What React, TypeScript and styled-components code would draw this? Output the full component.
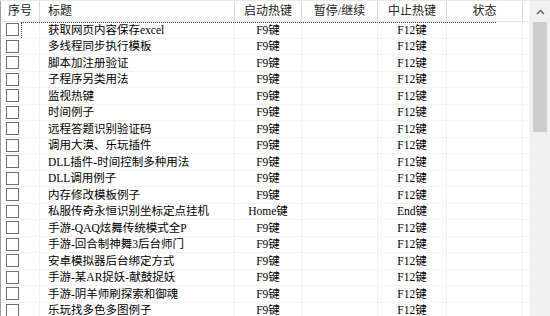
import React from 'react';
import styled, { createGlobalStyle } from 'styled-components';

const GlobalStyle = createGlobalStyle`
  html, body {
    margin: 0;
    padding: 0;
    background: #ffffff;
  }
  body {
    font-family: "Liberation Serif", "Noto Sans CJK SC", serif;
    font-size: 12px;
    color: #000;
  }
`;

const columns = [
  { key: 'no', label: '序号', width: 39, align: 'center' },
  { key: 'title', label: '标题', width: 195, align: 'left' },
  { key: 'start', label: '启动热键', width: 67, align: 'center' },
  { key: 'pause', label: '暂停/继续', width: 76, align: 'center' },
  { key: 'stop', label: '中止热键', width: 69, align: 'center' },
  { key: 'state', label: '状态', width: 76, align: 'center' },
];

const rows = [
  { title: '获取网页内容保存excel', start: 'F9键', stop: 'F12键' },
  { title: '多线程同步执行模板', start: 'F9键', stop: 'F12键' },
  { title: '脚本加注册验证', start: 'F9键', stop: 'F12键' },
  { title: '子程序另类用法', start: 'F9键', stop: 'F12键' },
  { title: '监视热键', start: 'F9键', stop: 'F12键' },
  { title: '时间例子', start: 'F9键', stop: 'F12键' },
  { title: '远程答题识别验证码', start: 'F9键', stop: 'F12键' },
  { title: '调用大漠、乐玩插件', start: 'F9键', stop: 'F12键' },
  { title: 'DLL插件-时间控制多种用法', start: 'F9键', stop: 'F12键' },
  { title: 'DLL调用例子', start: 'F9键', stop: 'F12键' },
  { title: '内存修改模板例子', start: 'F9键', stop: 'F12键' },
  { title: '私服传奇永恒识别坐标定点挂机', start: 'Home键', stop: 'End键' },
  { title: '手游-QAQ炫舞传统模式全P', start: 'F9键', stop: 'F12键' },
  { title: '手游-回合制神舞3后台师门', start: 'F9键', stop: 'F12键' },
  { title: '安卓模拟器后台绑定方式', start: 'F9键', stop: 'F12键' },
  { title: '手游-某AR捉妖-献鼓捉妖', start: 'F9键', stop: 'F12键' },
  { title: '手游-阴羊师刷探索和御魂', start: 'F9键', stop: 'F12键' },
  { title: '乐玩找多色多图例子', start: 'F9键', stop: 'F12键' },
];

const Window = styled.div`
  display: flex;
  width: 550px;
  height: 316px;
  overflow: hidden;
  border-top: 1px solid #e8e8e8;
  box-sizing: border-box;
`;

const ListArea = styled.div`
  display: flex;
  flex-direction: column;
  width: 530px;
  border-left: 1px solid #a0a0a0;
  box-sizing: border-box;
`;

const HeaderRow = styled.div`
  display: flex;
  height: 21px;
  flex-shrink: 0;
  background: #ffffff;
  border-bottom: 1px solid #e5e5e5;
  box-sizing: border-box;
`;

const HeaderCell = styled.div<{ $w: number; $align: string }>`
  width: ${p => p.$w}px;
  flex-shrink: 0;
  display: flex;
  align-items: center;
  justify-content: ${p => (p.$align === 'left' ? 'flex-start' : 'center')};
  padding-left: ${p => (p.$align === 'left' ? 8 : 0)}px;
  border-right: 1px solid #d9d9d9;
  box-sizing: border-box;
  font-size: 12px;
  line-height: 14px;
  color: #222;
`;

const Body = styled.div`
  display: flex;
  flex-direction: column;
`;

const Row = styled.div`
  display: flex;
  height: 16.5px;
  flex-shrink: 0;
  position: relative;
  box-sizing: border-box;
  border-bottom: 1px solid #f2f2f2;
`;

const FocusRect = styled.div`
  position: absolute;
  left: 20px;
  top: 0;
  width: 474px;
  bottom: 0;
  border-top: 1px dotted #333;
  border-left: 1px dotted #333;
  pointer-events: none;
`;

const Cell = styled.div<{ $w: number; $align: string }>`
  width: ${p => p.$w}px;
  flex-shrink: 0;
  display: flex;
  align-items: center;
  justify-content: ${p =>
    p.$align === 'left' ? 'flex-start' : p.$align === 'box' ? 'flex-start' : 'center'};
  padding-left: ${p => (p.$align === 'left' ? 8 : p.$align === 'box' ? 5 : 0)}px;
  border-right: 1px solid #f0f0f0;
  box-sizing: border-box;
  font-size: 11.5px;
  line-height: 14px;
  white-space: nowrap;
  overflow: hidden;
  color: #000;
`;

const CheckBox = styled.span`
  display: block;
  width: 13px;
  height: 13px;
  border: 1px solid #6f6f6f;
  background: #fff;
  box-sizing: border-box;
`;

const ScrollBar = styled.div`
  width: 20px;
  display: flex;
  flex-direction: column;
  align-items: center;
  background: #f0f0f0;
  border-left: 1px solid #f6f6f6;
`;

const ArrowButton = styled.div`
  height: 21px;
  width: 100%;
  display: flex;
  align-items: center;
  justify-content: center;
  flex-shrink: 0;
`;

const Thumb = styled.div`
  width: 14px;
  height: 110px;
  background: #cdcdcd;
`;

export default function App() {
  return (
    <>
      <GlobalStyle />
      <Window>
        <ListArea>
          <HeaderRow>
            {columns.map(c => (
              <HeaderCell key={c.key} $w={c.width} $align={c.align}>
                {c.label}
              </HeaderCell>
            ))}
          </HeaderRow>
          <Body>
            {rows.map((r, i) => (
              <Row key={i}>
                {i === 0 && <FocusRect />}
                <Cell $w={columns[0].width} $align="box">
                  <CheckBox />
                </Cell>
                <Cell $w={columns[1].width} $align="left">
                  {r.title}
                </Cell>
                <Cell $w={columns[2].width} $align="center">
                  {r.start}
                </Cell>
                <Cell $w={columns[3].width} $align="center" />
                <Cell $w={columns[4].width} $align="center">
                  {r.stop}
                </Cell>
                <Cell $w={columns[5].width} $align="center" />
              </Row>
            ))}
          </Body>
        </ListArea>
        <ScrollBar>
          <ArrowButton>
            <svg width="9" height="6" viewBox="0 0 9 6">
              <path d="M1 5 L4.5 1.5 L8 5" fill="none" stroke="#606060" strokeWidth="1.4" />
            </svg>
          </ArrowButton>
          <Thumb />
        </ScrollBar>
      </Window>
    </>
  );
}
